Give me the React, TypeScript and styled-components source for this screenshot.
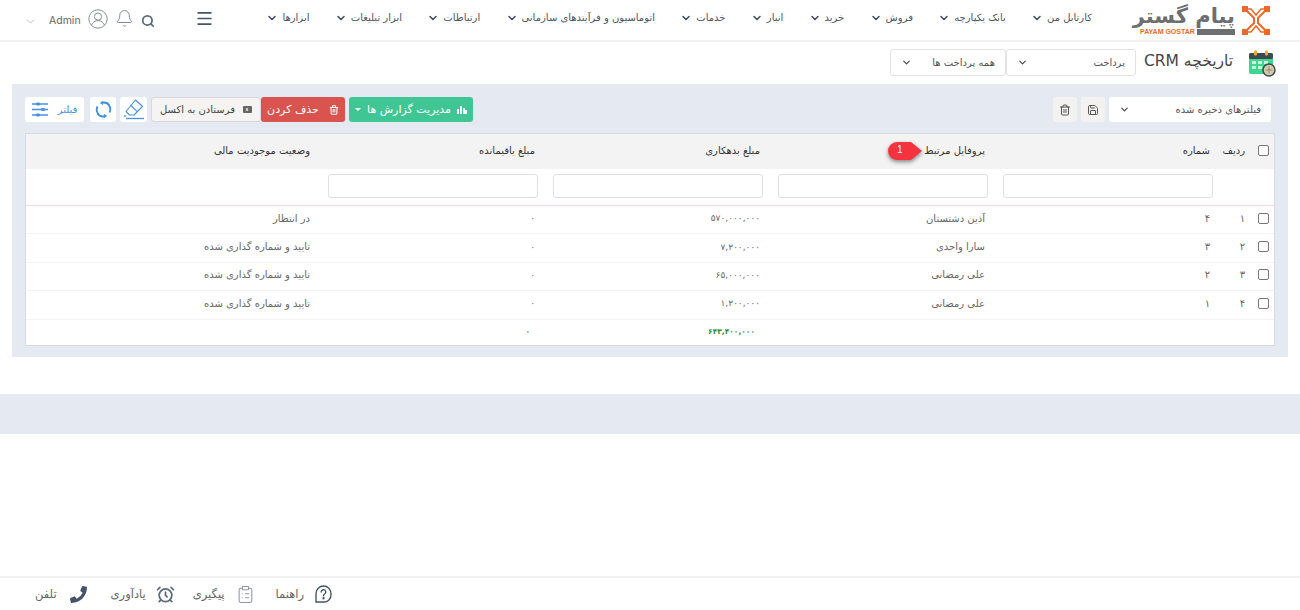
import React from "react";
import styled, {createGlobalStyle} from "styled-components";
import {AlarmClock, Bell, ChevronDown, ClipboardList, Menu, Save, Search, Trash2} from "lucide-react";
import {FaPhoneAlt} from "react-icons/fa";

const GlobalStyle = createGlobalStyle`
  html, body {
    margin: 0;
    padding: 0;
    background: #fff;
    font-family: "DejaVu Sans", "Liberation Sans", sans-serif;
    font-size: 10px;
    color: #555;
  }
  * { box-sizing: border-box; }
`;

const menuItems = [
    "کارتابل من",
    "بانک یکپارچه",
    "فروش",
    "خرید",
    "انبار",
    "خدمات",
    "اتوماسیون و فرآیندهای سازمانی",
    "ارتباطات",
    "ابزار تبلیغات",
    "ابزارها",
];

const rows = [
    {radif: "۱", number: "۴", profile: "آذین دشتستان", debt: "۵۷۰,۰۰۰,۰۰۰", rest: "۰", status: "در انتظار"},
    {radif: "۲", number: "۳", profile: "سارا واحدی", debt: "۷,۲۰۰,۰۰۰", rest: "۰", status: "تایید و شماره گذاری شده"},
    {radif: "۳", number: "۲", profile: "علی رمضانی", debt: "۶۵,۰۰۰,۰۰۰", rest: "۰", status: "تایید و شماره گذاری شده"},
    {radif: "۴", number: "۱", profile: "علی رمضانی", debt: "۱,۲۰۰,۰۰۰", rest: "۰", status: "تایید و شماره گذاری شده"},
];

const LogoMark = () => (
    <svg width="28" height="29" viewBox="0 0 28 29" fill="none" stroke="#ea6a2a" strokeWidth="2">
        <g fill="#ea6a2a" stroke="none">
            <rect x="0" y="0" width="6" height="6"/>
            <rect x="22" y="0" width="6" height="6"/>
            <rect x="0" y="23" width="6" height="6"/>
            <rect x="22" y="23" width="6" height="6"/>
        </g>
        <path d="M5 5l7 7v5l-7 7M23 5l-7 7v5l7 7"/>
        <path d="M6 3h3l5 6 5-6h3M6 26h3l5-6 5 6h3" strokeWidth="1.6"/>
    </svg>
);

const Logo = () => (
    <LogoBox>
        <LogoWords>
            <LogoName>پیام گستر</LogoName>
            <LogoStrip>
                <LogoLatin>PAYAM GOSTAR</LogoLatin>
                <LogoBar/>
            </LogoStrip>
        </LogoWords>
        <LogoMark/>
    </LogoBox>
);

const CalendarIcon = () => (
    <svg width="28" height="28" viewBox="0 0 28 28">
        <rect x="1" y="4" width="24" height="21" rx="2" fill="#3ed78f"/>
        <rect x="1" y="4" width="24" height="6" rx="1.500" fill="#3d4a4f"/>
        <rect x="6" y="1.500" width="3" height="5" rx="1" fill="#f0a92e"/>
        <rect x="17" y="1.500" width="3" height="5" rx="1" fill="#f0a92e"/>
        <g fill="#c9f5df">
            <rect x="4" y="12" width="4" height="3"/>
            <rect x="10" y="12" width="4" height="3"/>
            <rect x="16" y="12" width="4" height="3"/>
            <rect x="4" y="17" width="4" height="3"/>
            <rect x="10" y="17" width="4" height="3"/>
        </g>
        <circle cx="21" cy="21" r="6" fill="#d6c9ac" stroke="#3d4a4f" strokeWidth="1.500"/>
        <path d="M21 17.500v7M17.500 21h7" stroke="#8d8a78" strokeWidth="1"/>
    </svg>
);

const UserIcon = () => (
    <svg width="20" height="20" viewBox="0 0 20 20" fill="none" stroke="#8a8f96" strokeWidth="1">
        <circle cx="10" cy="10" r="9.200"/>
        <circle cx="10" cy="7.600" r="3.600"/>
        <path d="M3.600 16.200c1-3.200 3.400-4.600 6.400-4.600s5.400 1.400 6.400 4.600"/>
    </svg>
);

const HelpIcon = () => (
    <svg width="17" height="18" viewBox="0 0 17 18" fill="none" stroke="#44546a" strokeWidth="1.400">
        <path d="M8.500 1a7.500 7.500 0 0 1 7.500 7.500V10a7 7 0 0 1-7 7H1V8.500A7.500 7.500 0 0 1 8.500 1z"/>
        <path d="M6.200 7a2.300 2.300 0 1 1 3.400 2c-.8.500-1.100 1-1.100 1.800" strokeLinecap="round"/>
        <circle cx="8.500" cy="13.200" r=".5" fill="#44546a"/>
    </svg>
);

const SlidersIcon = () => (
    <svg width="16" height="15" viewBox="0 0 16 15" stroke="#4a90e2" fill="#4a90e2" strokeWidth="1.300">
        <path d="M0 2h16M0 7.500h16M0 13h16"/>
        <rect x="4" y=".8" width="4" height="2.400" rx="1.200" strokeWidth=".5"/>
        <rect x="9" y="6.300" width="4" height="2.400" rx="1.200" strokeWidth=".5"/>
        <rect x="4" y="11.800" width="4" height="2.400" rx="1.200" strokeWidth=".5"/>
    </svg>
);

const ReloadIcon = () => (
    <svg width="17" height="17" viewBox="0 0 17 17" fill="none" stroke="#3f8fd8" strokeWidth="1.800">
        <path d="M13.700 4a7 7 0 0 1 .8 7.500M3.300 13a7 7 0 0 1-.8-7.500"/>
        <path d="M2.500 12.500A7 7 0 0 0 10.500 15M14.500 4.500A7 7 0 0 0 6.500 2" strokeWidth="1.800"/>
        <path d="M8 .5l-2 1.500 2 1.500M9 13.500l2 1.500-2 1.500" strokeWidth="1.300"/>
    </svg>
);

const EraserIcon = () => (
    <svg width="21" height="21" viewBox="0 0 21 21" fill="none" stroke="#4a90e2" strokeWidth="1.100">
        <path d="M12.500 1l7 6.500-8.500 8.500H6.500L3 12.500z" strokeLinejoin="round"/>
        <path d="M7.500 6l7 6.800"/>
        <path d="M5 19.500h16" strokeWidth="1.300"/>
        <circle cx="2" cy="17" r=".9" fill="#4a90e2" stroke="none"/>
        <circle cx="4" cy="19.500" r=".9" fill="#4a90e2" stroke="none"/>
    </svg>
);

const ExcelIcon = () => (
    <svg width="9" height="9" viewBox="0 0 9 9">
        <rect x="0" y="1" width="9" height="7" rx="1" fill="#666"/>
        <path d="M3 3l2 3M5 3L3 6" stroke="#fff" strokeWidth=".8"/>
    </svg>
);

const ChartIcon = () => (
    <svg width="10" height="9" viewBox="0 0 10 9" fill="#fff">
        <rect x="0" y="4" width="2" height="5"/>
        <rect x="3" y="1" width="2" height="8"/>
        <rect x="6" y="3" width="2" height="6"/>
        <rect x="8" y="5" width="2" height="4"/>
    </svg>
);

const Callout = () => (
    <CalloutBox>
        <svg width="36" height="20" viewBox="0 0 36 20">
            <path d="M10 1h14l11 9-11 9H10a9 9 0 0 1 0-18z" fill="#f5333f"/>
        </svg>
        <CalloutNumber>1</CalloutNumber>
    </CalloutBox>
);

const App = () => {
    return (
        <Page>
            <GlobalStyle/>
            <Header>
                <Logo/>
                <Nav>
                    {menuItems.map(item => (
                        <NavItem key={item}>
                            {item}
                            <ChevronDown size={12} strokeWidth={3} color="#3d4a5c"/>
                        </NavItem>
                    ))}
                </Nav>
                <HeaderTools>
                    <Menu size={19} color="#44546a" strokeWidth={2.2}/>
                    <SearchIcon size={14} color="#5c6b7e" strokeWidth={3}/>
                    <Bell size={19} color="#7c838b" strokeWidth={1.2}/>
                    <UserIcon/>
                    <AdminName>Admin</AdminName>
                    <AdminChevron size={13} color="#9aa0a6" strokeWidth={1.2}/>
                </HeaderTools>
            </Header>

            <TitleRow>
                <CalendarIcon/>
                <Title>تاریخچه CRM</Title>
                <SelectGroup>
                    <FakeSelect $width={130}>
                        پرداخت
                        <ChevronDown size={11} strokeWidth={2.5} color="#444"/>
                    </FakeSelect>
                    <FakeSelect $width={116}>
                        همه پرداخت ها
                        <ChevronDown size={11} strokeWidth={2.5} color="#444"/>
                    </FakeSelect>
                </SelectGroup>
            </TitleRow>

            <Panel>
                <Toolbar>
                    <ToolGroup>
                        <FilterButton>
                            <SlidersIcon/>
                            فیلتر
                        </FilterButton>
                        <ReloadButton><ReloadIcon/></ReloadButton>
                        <EraserButton><EraserIcon/></EraserButton>
                        <ExcelButton>
                            فرستادن به اکسل
                            <ExcelIcon/>
                        </ExcelButton>
                        <DeleteButton>
                            حذف کردن
                            <Trash2 size={10} color="#fff" strokeWidth={2.5}/>
                        </DeleteButton>
                        <ManageButton>
                            <Caret/>
                            مدیریت گزارش ها
                            <ChartIcon/>
                        </ManageButton>
                    </ToolGroup>
                    <ToolGroup>
                        <GreyButton><Trash2 size={12} color="#555"/></GreyButton>
                        <GreyButton><Save size={12} color="#555"/></GreyButton>
                        <SavedFilters>
                            فیلترهای ذخیره شده
                            <ChevronDown size={11} strokeWidth={2.5} color="#444"/>
                        </SavedFilters>
                    </ToolGroup>
                </Toolbar>

                <Table>
                    <HeadRow>
                        <Cell><CheckBox/></Cell>
                        <Cell>ردیف</Cell>
                        <Cell>شماره</Cell>
                        <ProfileCell>
                            پروفایل مرتبط
                            <Callout/>
                        </ProfileCell>
                        <Cell>مبلغ بدهکاری</Cell>
                        <Cell>مبلغ باقیمانده</Cell>
                        <Cell>وضعیت موجودیت مالی</Cell>
                    </HeadRow>
                    <FilterRow>
                        <span/>
                        <span/>
                        <FilterInput/>
                        <FilterInput/>
                        <FilterInput/>
                        <FilterInput/>
                        <span/>
                    </FilterRow>
                    {rows.map(row => (
                        <BodyRow key={row.radif}>
                            <Cell><CheckBox/></Cell>
                            <Cell>{row.radif}</Cell>
                            <Cell>{row.number}</Cell>
                            <Cell>{row.profile}</Cell>
                            <MoneyCell>{row.debt}</MoneyCell>
                            <MoneyCell>{row.rest}</MoneyCell>
                            <Cell>{row.status}</Cell>
                        </BodyRow>
                    ))}
                    <TotalRow>
                        <span/>
                        <span/>
                        <span/>
                        <span/>
                        <TotalCell>۶۴۳,۴۰۰,۰۰۰</TotalCell>
                        <TotalCell>۰</TotalCell>
                        <span/>
                    </TotalRow>
                </Table>
            </Panel>

            <Band/>

            <Footer>
                <FooterItem $gap={13} $after={24}>
                    تلفن
                    <PhoneIcon size={17} color="#44546a"/>
                </FooterItem>
                <FooterItem $gap={10} $after={18}>
                    یادآوری
                    <AlarmClock size={19} color="#5c6b7e" strokeWidth={2.2}/>
                </FooterItem>
                <FooterItem $gap={11} $after={21}>
                    پیگیری
                    <ClipboardList size={19} color="#8a97a8" strokeWidth={1.3}/>
                </FooterItem>
                <FooterItem $gap={11} $after={0}>
                    راهنما
                    <HelpIcon/>
                </FooterItem>
            </Footer>
        </Page>
    );
};

const Page = styled.div`
  display: flex;
  flex-direction: column;
  height: 610px;
  overflow: hidden;
`;

const Header = styled.header`
  display: flex;
  flex-direction: row-reverse;
  align-items: center;
  height: 42px;
  padding: 0 30px 0 24px;
  border-bottom: 2px solid #f1f1f1;
`;

const LogoBox = styled.div`
  display: flex;
  align-items: center;
  gap: 7px;
  width: 135px;
  margin-left: 43px;
`;

const LogoWords = styled.div`
  display: flex;
  flex-direction: column;
  width: 100px;
`;

const LogoName = styled.span`
  direction: rtl;
  display: block;
  height: 23px;
  font-size: 21px;
  line-height: 23px;
  font-weight: 700;
  color: #6d6e70;
  white-space: nowrap;
`;

const LogoStrip = styled.div`
  display: flex;
  align-items: center;
  gap: 2px;
  padding-left: 5px;
`;

const LogoLatin = styled.span`
  font-family: "Liberation Sans", sans-serif;
  font-size: 7px;
  line-height: 7px;
  font-weight: 700;
  white-space: nowrap;
  color: #ea6a2a;
`;

const LogoBar = styled.i`
  flex: 1;
  height: 6px;
  background: #6d6e70;
`;

const Nav = styled.nav`
  display: flex;
  direction: rtl;
  gap: 25.3px;
  margin-bottom: 5px;
  margin-left: auto;
`;

const NavItem = styled.div`
  display: flex;
  align-items: center;
  gap: 4px;
  white-space: nowrap;
  font-size: 10px;
  color: #4a5564;
`;

const HeaderTools = styled.div`
  display: flex;
  flex-direction: row-reverse;
  align-items: center;
  gap: 7px;
  margin-right: auto;
  margin-bottom: 3px;

  svg:first-child {
    margin-left: 33px;
  }
`;

const SearchIcon = styled(Search)`
  margin-top: 4px;
`;

const AdminChevron = styled(ChevronDown)`
  margin-top: 5px;
`;

const AdminName = styled.span`
  margin: 3px 0 0 5px;
  font-family: "Inter", sans-serif;
  font-size: 10.5px;
  color: #666;
`;

const TitleRow = styled.div`
  display: flex;
  direction: rtl;
  align-items: center;
  height: 42px;
  padding: 0 24px 1px 0;
`;

const Title = styled.h1`
  margin: 0 15px 4px 8px;
  font-size: 15.5px;
  font-weight: 400;
  color: #444;
`;

const SelectGroup = styled.div`
  display: flex;
`;

const FakeSelect = styled.div<{$width: number}>`
  display: flex;
  align-items: center;
  justify-content: space-between;
  width: ${props => props.$width}px;
  height: 27px;
  padding: 0 10px;
  background: #fff;
  border: 1px solid #e3e3e3;
  border-radius: 3px;
  color: #555;
`;

const Panel = styled.section`
  height: 273px;
  margin: 0 12px;
  padding: 13px 13px 12px;
  background: #e5e9f1;
`;

const Toolbar = styled.div`
  display: flex;
  justify-content: space-between;
  height: 25px;
  margin-bottom: 11px;
  padding-right: 4px;
`;

const ToolGroup = styled.div`
  display: flex;
  gap: 4px;
`;

const BaseButton = styled.button`
  display: flex;
  align-items: center;
  justify-content: center;
  height: 25px;
  padding: 0;
  border: none;
  border-radius: 3px;
  font-family: inherit;
  font-size: 10px;
`;

const FilterButton = styled(BaseButton)`
  width: 59px;
  gap: 10px;
  background: #fff;
  color: #4a90e2;
`;

const ReloadButton = styled(BaseButton)`
  width: 26px;
  margin-left: 2px;
  background: #fff;
`;

const EraserButton = styled(BaseButton)`
  width: 27px;
  background: #fff;
`;

const ExcelButton = styled(BaseButton)`
  width: 110px;
  gap: 8px;
  background: #f6f4f2;
  border: 1px solid #d9d9d9;
  color: #444;
`;

const DeleteButton = styled(BaseButton)`
  width: 84px;
  gap: 10px;
  margin-left: -4px;
  background: #d9534f;
  color: #fff;
  font-size: 11px;
`;

const ManageButton = styled(BaseButton)`
  width: 124px;
  gap: 6px;
  background: #3fc694;
  color: #fff;
  font-size: 11px;
`;

const Caret = styled.i`
  width: 0;
  height: 0;
  border-left: 3px solid transparent;
  border-right: 3px solid transparent;
  border-top: 3px solid #fff;
`;

const GreyButton = styled(BaseButton)`
  width: 24px;
  background: #f3f2f1;
`;

const SavedFilters = styled.div`
  display: flex;
  direction: rtl;
  align-items: center;
  justify-content: space-between;
  width: 162px;
  height: 25px;
  padding: 0 10px;
  background: #fff;
  border-radius: 3px;
  color: #555;
`;

const Table = styled.div`
  direction: rtl;
  height: 213px;
  background: #fff;
  border: 1px solid #d4dbe4;
`;

const Row = styled.div`
  display: grid;
  grid-template-columns: 26px 35px 225px 225px 225px 225px 1fr;
  align-items: center;
  padding-bottom: 3px;
`;

const Cell = styled.div`
  padding-right: 3px;
  white-space: nowrap;
`;

const MoneyCell = styled(Cell)`
  font-size: 9px;
`;

const HeadRow = styled(Row)`
  height: 35px;
  background: #f3f3f3;
  color: #333;
`;

const ProfileCell = styled(Cell)`
  position: relative;
`;

const CalloutBox = styled.div`
  position: absolute;
  top: -4px;
  left: 124px;
  width: 36px;
  height: 20px;
  filter: drop-shadow(0 2px 2px rgba(0, 0, 0, 0.45));
`;

const CalloutNumber = styled.span`
  position: absolute;
  top: 3px;
  left: 10px;
  font-family: "Liberation Sans", sans-serif;
  font-size: 10px;
  color: #fff;
`;

const FilterRow = styled(Row)`
  height: 37px;
  border-bottom: 1px solid #f8d9d9;
`;

const FilterInput = styled.input`
  width: 210px;
  height: 24px;
  border: 1px solid #dcdfe3;
  border-radius: 3px;
  background: #fff;
`;

const BodyRow = styled(Row)`
  height: 28.4px;
  border-bottom: 1px solid #f3f3f3;
  color: #666;
`;

const TotalRow = styled(Row)`
  height: 27px;
`;

const TotalCell = styled(Cell)`
  padding-right: 8px;
  color: #2e8b2e;
  font-size: 7.5px;
  font-weight: 700;
`;

const CheckBox = styled.input.attrs({type: "checkbox"})`
  appearance: none;
  display: block;
  width: 11px;
  height: 11px;
  margin: 0 2px 0 0;
  border: 1px solid #777;
  border-radius: 2px;
  background: #fff;
`;

const Band = styled.div`
  height: 40px;
  margin-top: 37px;
  background: #e5e9f1;
`;

const Footer = styled.footer`
  display: flex;
  align-items: center;
  height: 34px;
  margin-top: auto;
  padding-left: 35px;
  border-top: 2px solid #f1f1f1;
`;

const FooterItem = styled.div<{$gap: number; $after: number}>`
  display: flex;
  align-items: center;
  gap: ${props => props.$gap}px;
  margin-right: ${props => props.$after}px;
  font-size: 11.5px;
  color: #666;
`;

const PhoneIcon = styled(FaPhoneAlt)`
  transform: scaleX(-1);
`;

export default App;
